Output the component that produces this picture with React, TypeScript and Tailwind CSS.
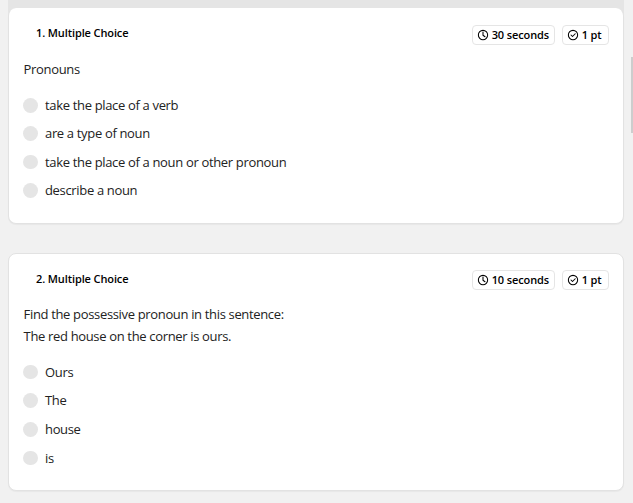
interface Question {
  id: number;
  time: string;
  prompt: string[];
  options: string[];
}

const questions: Question[] = [
  {
    id: 1,
    time: "30 seconds",
    prompt: ["Pronouns"],
    options: [
      "take the place of a verb",
      "are a type of noun",
      "take the place of a noun or other pronoun",
      "describe a noun",
    ],
  },
  {
    id: 2,
    time: "10 seconds",
    prompt: [
      "Find the possessive pronoun in this sentence:",
      "The red house on the corner is ours.",
    ],
    options: ["Ours", "The", "house", "is"],
  },
];

export default function App() {
  return (
    <div className="relative h-[503px] w-[633px] overflow-hidden bg-[#f1f1f1] pl-2 pr-[9px] font-['Open_Sans',sans-serif]">
      {/* Bottom of the previous section */}
      <div className="h-2 bg-[#e5e5e5]" />

      <div className="flex flex-col gap-[29px] bg-[linear-gradient(#e5e5e5_8px,transparent_8px)]">
        {questions.map((question) => (
          <QuestionCard key={question.id} question={question} />
        ))}
      </div>

      {/* Scrollbar thumb */}
      <div className="absolute right-0 top-[57px] h-[76px] w-[2px] bg-[#cdcdcd]" />
    </div>
  );
}

function QuestionCard({ question }: { question: Question }) {
  const first = question.id === 1;

  return (
    <div
      className={`rounded-lg border border-[#e2e2e2] bg-white px-[14px] shadow-[0_1px_1px_rgba(0,0,0,0.04)] ${
        first ? "h-[216px] border-t-0 pt-[17px]" : "h-[238px] pt-4"
      }`}
    >
      <div className="flex h-5 items-center justify-between pl-[13px]">
        <p
          className={`relative text-[11px] font-semibold leading-4 tracking-[-0.11px] text-black ${
            first ? "-top-[2px]" : "-top-px"
          }`}
        >
          {question.id}. Multiple Choice
        </p>
        <div className="flex gap-[7px]">
          <Badge className="w-[83px]" label={question.time}>
            <path d="M12 6v6.5l4 3" />
          </Badge>
          <Badge className="w-[47px]" label="1 pt">
            <path d="m8 12 3 3 5.5-5.5" />
          </Badge>
        </div>
      </div>

      <div className="mt-[13px] pl-[0.6px] text-[13px] leading-[22px] tracking-[-0.34px] text-[#222]">
        {question.prompt.map((line) => (
          <p key={line}>{line}</p>
        ))}
      </div>

      <ul className={first ? "mt-[10.9px]" : "mt-[10.6px]"}>
        {question.options.map((option) => (
          <li
            key={option}
            className={`flex items-center gap-[7px] text-[13px] leading-5 tracking-[-0.335px] text-[#222] ${
              first ? "h-[28.4px]" : "h-[28.6px]"
            }`}
          >
            <span className="mt-[0.5px] h-[14.5px] w-[15px] rounded-full bg-[#e5e5e5]" />
            {option}
          </li>
        ))}
      </ul>
    </div>
  );
}

function Badge({
  label,
  className,
  children,
}: {
  label: string;
  className: string;
  children: React.ReactNode;
}) {
  return (
    <div
      className={`flex h-5 items-center gap-[2.7px] rounded border border-[#e5e5e5] pl-1 text-[11px] font-semibold tracking-[-0.11px] text-black ${className}`}
    >
      <svg
        className="size-3 shrink-0"
        viewBox="0 0 24 24"
        fill="none"
        stroke="currentColor"
        strokeWidth="2.1"
        strokeLinecap="round"
        strokeLinejoin="round"
      >
        <circle cx="12" cy="12" r="9.3" />
        {children}
      </svg>
      <span className="whitespace-nowrap">{label}</span>
    </div>
  );
}
